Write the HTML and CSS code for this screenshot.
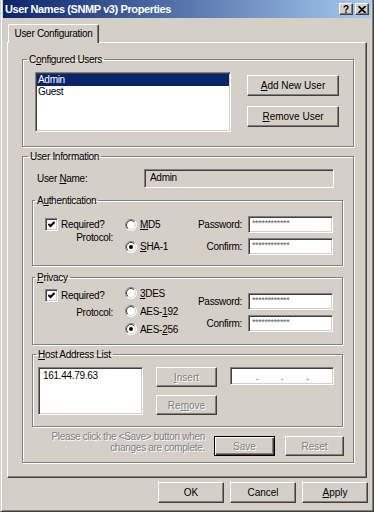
FILE: index.html
```html
<!DOCTYPE html>
<html lang="en">
<head>
    <meta charset="UTF-8">
    <title>User Names (SNMP v3) Properties</title>
    <link rel="stylesheet" href="styles.css">
</head>
<body>
    <svg class="sprite" width="0" height="0">
        <defs>
            <linearGradient id="rg-outer" x1="0" y1="0" x2="1" y2="1">
                <stop offset="0.5" stop-color="#808080"/><stop offset="0.5" stop-color="#ffffff"/>
            </linearGradient>
            <linearGradient id="rg-inner" x1="0" y1="0" x2="1" y2="1">
                <stop offset="0.5" stop-color="#404040"/><stop offset="0.5" stop-color="#d4d0c8"/>
            </linearGradient>
            <symbol id="radio" viewBox="0 0 12 12">
                <circle cx="6" cy="6" r="5.5" fill="#fff" stroke="url(#rg-outer)"/>
                <circle cx="6" cy="6" r="4.5" fill="none" stroke="url(#rg-inner)"/>
            </symbol>
            <symbol id="radio-on" viewBox="0 0 12 12">
                <use href="#radio"/>
                <circle cx="6" cy="6" r="2" fill="#000"/>
            </symbol>
            <symbol id="check" viewBox="0 0 7 7">
                <path d="M0.5 3 L2.5 5 L6.5 1" fill="none" stroke="#000" stroke-width="2"/>
            </symbol>
        </defs>
    </svg>

    <div class="window">
        <div class="titlebar">
            <span class="title">User Names (SNMP v3) Properties</span>
            <div class="title-buttons">
                <span class="tbtn">?</span>
                <span class="tbtn">
                    <svg width="8" height="7" viewBox="0 0 8 7"><path d="M0.5 0 L7.5 7 M7.5 0 L0.5 7" stroke="#000" stroke-width="1.6"/></svg>
                </span>
            </div>
        </div>

        <div class="tabs">
            <div class="tab active">User Configuration</div>
        </div>

        <div class="panel">
            <fieldset class="group users">
                <legend>C<u>o</u>nfigured Users</legend>
                <div class="users-row">
                    <ul class="listbox user-list">
                        <li class="selected">Admin</li>
                        <li>Guest</li>
                    </ul>
                    <div class="btn-col">
                        <button class="btn wide"><u>A</u>dd New User</button>
                        <button class="btn wide"><u>R</u>emove User</button>
                    </div>
                </div>
            </fieldset>

            <fieldset class="group info">
                <legend>User Information</legend>
                <div class="name-row">
                    <span>User <u>N</u>ame:</span>
                    <div class="field readonly">Admin</div>
                </div>

                <fieldset class="group sub auth">
                    <legend>A<u>u</u>thentication</legend>
                    <div class="opts">
                        <div class="opt-left">
                            <label class="check"><span class="checkbox"><svg width="7" height="7"><use href="#check"/></svg></span>Required?</label>
                            <span class="proto">Protocol:</span>
                        </div>
                        <div class="radios">
                            <label class="radio"><svg width="12" height="12"><use href="#radio"/></svg><span><u>M</u>D5</span></label>
                            <label class="radio"><svg width="12" height="12"><use href="#radio-on"/></svg><span><u>S</u>HA-1</span></label>
                        </div>
                        <div class="pw">
                            <span class="pw-label">Password:</span><span class="field pw-field">************</span>
                            <span class="pw-label">Confirm:</span><span class="field pw-field">************</span>
                        </div>
                    </div>
                </fieldset>

                <fieldset class="group sub privacy">
                    <legend><u>P</u>rivacy</legend>
                    <div class="opts">
                        <div class="opt-left">
                            <label class="check"><span class="checkbox"><svg width="7" height="7"><use href="#check"/></svg></span>Required?</label>
                            <span class="proto">Protocol:</span>
                        </div>
                        <div class="radios">
                            <label class="radio"><svg width="12" height="12"><use href="#radio"/></svg><span><u>3</u>DES</span></label>
                            <label class="radio"><svg width="12" height="12"><use href="#radio"/></svg><span>AES-<u>1</u>92</span></label>
                            <label class="radio"><svg width="12" height="12"><use href="#radio-on"/></svg><span>AES-<u>2</u>56</span></label>
                        </div>
                        <div class="pw">
                            <span class="pw-label">Password:</span><span class="field pw-field">************</span>
                            <span class="pw-label">Confirm:</span><span class="field pw-field">************</span>
                        </div>
                    </div>
                </fieldset>

                <fieldset class="group sub host">
                    <legend><u>H</u>ost Address List</legend>
                    <div class="host-row">
                        <ul class="listbox host-list">
                            <li>161.44.79.63</li>
                        </ul>
                        <div class="host-btns">
                            <button class="btn small" disabled><u>I</u>nsert</button>
                            <button class="btn small" disabled>Re<u>m</u>ove</button>
                        </div>
                        <div class="field ip"><span></span>.<span></span>.<span></span>.<span></span></div>
                    </div>
                </fieldset>

                <div class="save-row">
                    <p class="note">Please click the &lt;Save&gt; button when<br>changes are complete.</p>
                    <button class="btn save default" disabled>Save</button>
                    <button class="btn reset" disabled>Reset</button>
                </div>
            </fieldset>
        </div>

        <div class="dialog-buttons">
            <button class="btn dlg">OK</button>
            <button class="btn dlg">Cancel</button>
            <button class="btn dlg"><u>A</u>pply</button>
        </div>
    </div>
</body>
</html>
```

FILE: styles.css
```css
* { box-sizing: border-box; }
body { margin: 0; background: #d4d0c8; color: #000; font: 10px "Liberation Sans", Arial, sans-serif; letter-spacing: -0.3px; }
.sprite { position: absolute; width: 0; height: 0; overflow: hidden; }
u { text-decoration: underline; text-underline-offset: 1px; }

.window { width: 374px; height: 512px; border: 1px solid; border-top: 0; border-color: #d4d0c8 #404040 #404040 #d4d0c8; box-shadow: inset 1px 0 #fff, inset -1px -1px #808080; padding: 0 2px 2px 2px; }

.titlebar { height: 18px; display: flex; align-items: center; justify-content: space-between; padding: 0 2px 0 2px; background: linear-gradient(to right, #0a246a, #a6caf0); }
.title { color: #fff; font: bold 11px "Liberation Sans", Arial, sans-serif; letter-spacing: -0.4px; }
.title-buttons { display: flex; gap: 2px; }
.tbtn { width: 14px; height: 12px; display: flex; align-items: center; justify-content: center; background: #d4d0c8; border: 1px solid; border-color: #fff #404040 #404040 #fff; box-shadow: inset -1px -1px #808080; font: bold 10px "Liberation Sans", Arial, sans-serif; }

.tabs { display: flex; margin: 6px 0 -1px 5px; }
.tab { position: relative; z-index: 1; width: 91px; height: 19px; line-height: 17px; text-align: center; white-space: nowrap; background: #d4d0c8; border: 1px solid; border-bottom: 0; border-color: #fff #404040 #d4d0c8 #fff; box-shadow: inset -1px 0 #808080; border-radius: 2px 2px 0 0; }

.panel { width: 360px; height: 436px; margin-left: 4px; border: 1px solid; border-color: #fff #404040 #404040 #fff; box-shadow: inset -1px -1px #808080; padding: 10px 12px 0 14px; }

.group { margin: 0; min-width: 0; border: 1px solid #808080; box-shadow: inset 1px 1px #fff, 1px 1px #fff; }
.group legend { padding: 0 2px; line-height: 13px; height: 13px; }

.users { padding: 6px 14px 14px 4px; }
.users-row { display: flex; margin-left: 8px; }
.btn-col { display: flex; flex-direction: column; gap: 10px; margin: 3px 0 0 16px; }

.listbox { margin: 0; padding: 0; list-style: none; background: #fff; border: 1px solid; border-color: #808080 #fff #fff #808080; box-shadow: inset 1px 1px #404040, inset -1px -1px #d4d0c8; padding: 1px; }
.listbox li { line-height: 12px; padding-left: 1px; }
.listbox li.selected { background: #0a246a; color: #fff; }
.user-list { width: 196px; height: 60px; }

.btn { font: inherit; color: #000; padding: 0; background: #d4d0c8; border: 1px solid; border-color: #fff #404040 #404040 #fff; box-shadow: inset -1px -1px #808080; white-space: nowrap; }
.btn:disabled { color: #808080; text-shadow: 1px 1px #fff; }
.btn.default { border-color: #000; box-shadow: inset 1px 1px #fff, inset -1px -1px #404040, inset -2px -2px #808080; }
.wide { width: 92px; height: 21px; }
.small { width: 61px; height: 20px; }

.field { display: block; background: #fff; border: 1px solid; border-color: #808080 #fff #fff #808080; box-shadow: inset 1px 1px #404040, inset -1px -1px #d4d0c8; }
.field.readonly { background: #d4d0c8; }

.info { margin-top: 3px; padding: 6px 10px 6px 5px; }
.name-row { display: grid; grid-template-columns: 107px 190px; align-items: center; margin-left: 9px; }
.name-row .field { height: 19px; line-height: 15px; padding-left: 5px; }

.sub { margin-left: 4px; padding-left: 2px; padding-right: 9px; }
.auth { margin-top: 6px; padding-top: 9px; padding-bottom: 10px; }
.privacy { margin-top: 5px; padding-top: 0; padding-bottom: 6px; }
.host { margin-top: 3px; padding: 6px 8px 11px 3px; }

.opts { display: flex; margin-left: 10px; }
.opt-left { width: 80px; display: flex; flex-direction: column; }
.check { display: flex; align-items: center; gap: 3px; height: 17px; }
.checkbox { width: 13px; height: 13px; display: flex; align-items: center; justify-content: center; background: #fff; border: 1px solid; border-color: #808080 #fff #fff #808080; box-shadow: inset 1px 1px #404040, inset -1px -1px #d4d0c8; }
.proto { text-align: right; padding-right: 12px; line-height: 13px; }
.radios { width: 60px; display: flex; flex-direction: column; }
.radio { display: flex; align-items: center; gap: 3px; height: 17px; }
.pw { display: grid; grid-template-columns: 57px 85px; grid-auto-rows: 17px; column-gap: 6px; row-gap: 5px; align-items: center; }
.pw-label { text-align: right; }
.pw-field { height: 17px; padding-left: 3px; line-height: 13px; font-size: 9px; letter-spacing: -0.4px; color: #606060; }

.auth .radios { gap: 5px; }
.auth .proto { margin-top: -2px; }
.privacy .radio { height: 18px; }
.privacy .check { height: 18px; margin-top: 2px; }
.privacy .proto { margin-top: 2px; }
.privacy .pw { margin-top: 9px; align-self: flex-start; }

.host-row { display: flex; align-items: flex-start; margin-left: 2px; }
.host-list { width: 105px; height: 48px; }
.host-list li { padding-left: 3px; line-height: 13px; }
.host-btns { display: flex; flex-direction: column; gap: 8px; margin-left: 13px; }
.ip { width: 104px; height: 18px; margin-left: 13px; display: flex; align-items: center; padding: 0 2px; color: #404040; }
.ip span { flex: 1; }

.save-row { display: flex; justify-content: flex-end; align-items: flex-start; margin: 9px -1px 0 0; }
.note { margin: -5px 9px 0 0; text-align: right; line-height: 11px; white-space: nowrap; color: #808080; text-shadow: 1px 1px #fff; }
.save { width: 61px; height: 20px; }
.reset { width: 59px; height: 20px; margin-left: 10px; }

.dialog-buttons { display: flex; justify-content: flex-end; gap: 6px; margin-top: 4px; padding-right: 3px; }
.dlg { width: 66px; height: 21px; }
```
